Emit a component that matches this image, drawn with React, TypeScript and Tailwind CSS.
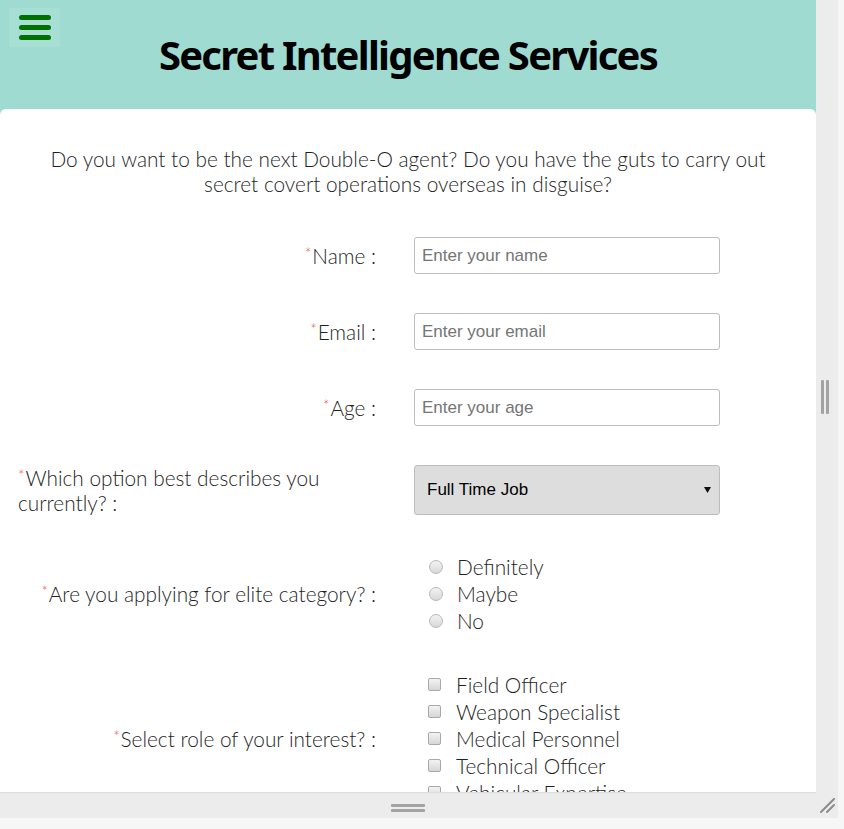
import { FC, ReactNode } from 'react';

const Star = () => (
  <span className="text-[#ef4d3f] text-[15px] leading-none relative top-[-5px] mr-[1px]">*</span>
);

const Row: FC<{ label: ReactNode; children: ReactNode; className?: string }> = ({
  label,
  children,
  className,
}) => (
  <div className={`flex items-center ${className ?? ''}`}>
    <div className="w-[358px] flex justify-end shrink-0">
      <label className="block text-[20.8px] leading-[25px] text-[#1f1f1f]">{label}</label>
    </div>
    <div className="ml-[38px]">{children}</div>
  </div>
);

const TextInput: FC<{ placeholder: string }> = ({ placeholder }) => (
  <input
    placeholder={placeholder}
    className="w-[306px] h-[37px] border border-[#bdbdbd] rounded-[3px] px-[7px] text-[17px] text-[#333] placeholder:text-[#757575] outline-none bg-white"
    style={{ fontFamily: '"Liberation Sans", Arial, sans-serif' }}
  />
);

const Radio = () => (
  <span className="w-[14px] h-[14px] rounded-full border border-[#b9b9b9] bg-gradient-to-b from-[#f3f3f3] to-[#d9d9d9] shrink-0" />
);

const Check = () => (
  <span className="w-[13px] h-[13px] rounded-[2px] border border-[#a9a9a9] bg-gradient-to-b from-[#f3f3f3] to-[#d6d6d6] shrink-0" />
);

const radios = ['Definitely', 'Maybe', 'No'];
const roles = [
  'Field Officer',
  'Weapon Specialist',
  'Medical Personnel',
  'Technical Officer',
  'Vehicular Expertise',
  'Communications',
];

export default function App() {
  return (
    <div
      className="w-[844px] h-[829px] bg-[#f6f6f6] overflow-hidden"
      style={{ fontFamily: 'Lato, "Open Sans", sans-serif' }}
    >
      <div className="grid grid-cols-[816px_22px] grid-rows-[793px_25px] bg-[#ececec] w-[838px]">
        {/* scrollable page */}
        <div className="overflow-hidden bg-[#9fdbd1] border-b border-[#dedede]">
          <header className="h-[109px] flex flex-col">
            <div className="pl-[9px] pt-[8px]">
              <button className="w-[51px] h-[39px] bg-[#a8dfd5] flex flex-col justify-center gap-[5px] px-[10px]">
                <span className="block h-[5px] w-[32px] rounded-full bg-[#007000]" />
                <span className="block h-[5px] w-[32px] rounded-full bg-[#007000]" />
                <span className="block h-[5px] w-[32px] rounded-full bg-[#007000]" />
              </button>
            </div>
            <h1
              className="text-center text-[40px] leading-[40px] font-bold text-black -mt-[12px] tracking-[-1.75px]"
              style={{ fontFamily: '"Noto Sans", Lato, sans-serif' }}
            >
              Secret Intelligence Services
            </h1>
          </header>
          <main className="bg-white rounded-t-[6px] pt-[37px] pl-[18px] pb-[40px] font-light">
            <p className="text-center text-[20.8px] leading-[25px] text-[#1f1f1f] -ml-[18px]">
              Do you want to be the next Double-O agent? Do you have the guts to carry out
              <br />
              secret covert operations overseas in disguise?
            </p>

            <Row className="mt-[41px]" label={<><Star />Name :</>}>
              <TextInput placeholder="Enter your name" />
            </Row>
            <Row className="mt-[39px]" label={<><Star />Email :</>}>
              <TextInput placeholder="Enter your email" />
            </Row>
            <Row className="mt-[39px]" label={<><Star />Age :</>}>
              <TextInput placeholder="Enter your age" />
            </Row>
            <Row
              className="mt-[39px]"
              label={<><Star />Which option best describes you currently? :</>}
            >
              <div
                className="w-[306px] h-[50px] bg-[#dddddd] border border-[#bdbdbd] rounded-[3px] flex items-center justify-between pl-[12px] pr-[8px] text-[17px] text-black font-normal"
                style={{ fontFamily: '"Liberation Sans", Arial, sans-serif' }}
              >
                <span>Full Time Job</span>
                <svg width="7" height="6" viewBox="0 0 7 6">
                  <path d="M0 0h7L3.5 6z" fill="#111" />
                </svg>
              </div>
            </Row>
            <Row className="mt-[38px]" label={<><Star />Are you applying for elite category? :</>}>
              <div className="flex flex-col pl-[15px]">
                {radios.map((r) => (
                  <div key={r} className="flex items-center h-[27px] gap-[14px]">
                    <Radio />
                    <span className="text-[20.8px] leading-[25px] text-[#1f1f1f]">{r}</span>
                  </div>
                ))}
              </div>
            </Row>
            <Row className="mt-[37px]" label={<><Star />Select role of your interest? :</>}>
              <div className="flex flex-col pl-[14px]">
                {roles.slice(0, 5).map((r) => (
                  <div key={r} className="flex items-center h-[27px] gap-[15px]">
                    <Check />
                    <span className="text-[20.8px] leading-[25px] text-[#1f1f1f]">{r}</span>
                  </div>
                ))}
              </div>
            </Row>
          </main>
        </div>

        {/* right resize bar */}
        <div className="flex items-center justify-center">
          <div className="flex gap-[2px] -ml-[5px]">
            <span className="w-[3px] h-[34px] bg-[#a3a3a3] rounded-[1px]" />
            <span className="w-[3px] h-[34px] bg-[#a3a3a3] rounded-[1px]" />
          </div>
        </div>

        {/* bottom resize bar */}
        <div className="flex justify-center pt-[11px]">
          <div className="flex flex-col gap-[2px] -ml-[1px]">
            <span className="w-[34px] h-[3px] bg-[#a3a3a3] rounded-[1px]" />
            <span className="w-[34px] h-[3px] bg-[#a3a3a3] rounded-[1px]" />
          </div>
        </div>
        <div className="flex items-end justify-start pl-[4px] pb-[4px]">
          <svg width="16" height="16" viewBox="0 0 16 16">
            <path d="M14 1L1 14M14 7L7 14" stroke="#8c8c8c" strokeWidth="2" strokeLinecap="round" />
          </svg>
        </div>
      </div>
    </div>
  );
}
